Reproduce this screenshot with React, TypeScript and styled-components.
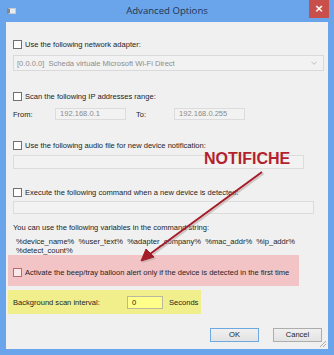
import React from 'react';
import styled, { createGlobalStyle } from 'styled-components';

const GlobalStyle = createGlobalStyle`
  html, body { margin: 0; padding: 0; background: #fff; }
  body { font-family: "Liberation Sans", Arial, sans-serif; }
`;

const variables = '%device_name%  %user_text%  %adapter_company%  %mac_addr%  %ip_addr%';

export default function App() {
    return <>
        <GlobalStyle />
        <Window>
            <TitleBar>
                <AppIcon />
                <Title>Advanced Options</Title>
                <CloseButton>×</CloseButton>
            </TitleBar>
            <Client>
                <CheckRow $mt={16}>
                    <Box />
                    <span>Use the following network adapter:</span>
                </CheckRow>
                <Select $mt={5}>
                    <span>[0.0.0.0]&nbsp; Scheda virtuale Microsoft Wi-Fi Direct</span>
                    <Caret viewBox="0 0 7 4"><path d="M0.5 0.5 L3.5 3.5 L6.5 0.5" /></Caret>
                </Select>

                <CheckRow $mt={19}>
                    <Box />
                    <span>Scan the following IP addresses range:</span>
                </CheckRow>
                <RangeRow>
                    <span>From:</span>
                    <IpInput>192.168.0.1</IpInput>
                    <span>To:</span>
                    <IpInput>192.168.0.255</IpInput>
                </RangeRow>

                <CheckRow $mt={19}>
                    <Box />
                    <span>Use the following audio file for new device notification:</span>
                </CheckRow>
                <TextInput $mt={4} $h={14} $w={291} />

                <CheckRow $mt={17}>
                    <Box />
                    <span>Execute the following command when a new device is detected:</span>
                </CheckRow>
                <TextInput $mt={3} $h={13} $w={301} />

                <Hint>You can use the following variables in the command string:</Hint>
                <Vars>
                    <div>{variables}</div>
                    <div>%detect_count%</div>
                </Vars>

                <PinkZone>
                    <CheckRow $mt={0}>
                        <Box $red />
                        <span>Activate the beep/tray balloon alert only if the device is detected in the first time</span>
                    </CheckRow>
                </PinkZone>

                <YellowZone>
                    <IntervalLabel>Background scan interval:</IntervalLabel>
                    <IntervalInput>0</IntervalInput>
                    <span>Seconds</span>
                </YellowZone>

                <Buttons>
                    <Button $default>OK</Button>
                    <Button>Cancel</Button>
                </Buttons>
                <Grip viewBox="0 0 8 8">
                    <path d="M7 1 L1 7 M7 4 L4 7 M7 7 L7 7" />
                </Grip>
            </Client>

            <Notice>NOTIFICHE</Notice>
            <Arrow viewBox="0 0 334 355">
                <g transform="translate(1.5 1.5)" stroke="#b9a9a9" fill="#b9a9a9" opacity="0.6">
                    <line x1="262" y1="172" x2="150" y2="254" strokeWidth="2" />
                    <polygon points="141,261 146,249 154,257" />
                </g>
                <g stroke="#a41c27" fill="#a41c27">
                    <line x1="262" y1="172" x2="150" y2="254" strokeWidth="2" />
                    <polygon points="141,261 146,249 154,257" />
                </g>
            </Arrow>
        </Window>
    </>;
}

const Window = styled.div`
    position: relative;
    width: 334px;
    height: 355px;
    background: #6aa5ec;
    display: flex;
    flex-direction: column;
    box-sizing: border-box;
    font-size: 7.55px;
    color: #1d1d1d;
    overflow: hidden;
`;

const TitleBar = styled.div`
    height: 22px;
    display: grid;
    grid-template-columns: 1fr auto 1fr;
    align-items: start;
`;

const AppIcon = styled.div`
    width: 9px;
    height: 6px;
    margin: 8px 0 0 7px;
    background: #e8ecef;
    border: 1px solid #c5ccd3;
    border-left: 3px solid #7c8790;
    box-sizing: border-box;
`;

const Title = styled.div`
    font-family: "Open Sans", "Noto Sans", sans-serif;
    font-size: 9.6px;
    line-height: 22px;
    color: #24344f;
`;

const CloseButton = styled.div`
    justify-self: end;
    width: 20px;
    height: 18px;
    margin-right: 5px;
    background: #c9504a;
    color: #fff;
    font-family: "DejaVu Sans", sans-serif;
    font-weight: bold;
    font-size: 11px;
    line-height: 17px;
    text-align: center;
`;

const Client = styled.div`
    position: relative;
    flex: 1;
    margin: 0 6px 6px;
    padding: 0 7px;
    background: #f0f0f0;
    display: flex;
    flex-direction: column;
    align-items: flex-start;
`;

const CheckRow = styled.label<{ $mt: number }>`
    margin-top: ${p => p.$mt}px;
    height: 12px;
    display: flex;
    align-items: center;
    gap: 3px;
    white-space: nowrap;
`;

const Box = styled.span<{ $red?: boolean }>`
    width: 9px;
    height: 9px;
    box-sizing: border-box;
    border: 1px solid ${p => p.$red ? '#b86a6e' : '#707070'};
    background: ${p => p.$red ? '#fbe9ea' : '#fff'};
`;

const Select = styled.div<{ $mt: number }>`
    margin-top: ${p => p.$mt}px;
    width: 311px;
    height: 16px;
    box-sizing: border-box;
    border: 1px solid #d9d9d9;
    background: #f2f2f2;
    color: #8c8c8c;
    padding: 0 6px 0 3px;
    display: flex;
    align-items: center;
    justify-content: space-between;
`;

const Caret = styled.svg`
    width: 6px;
    height: 4px;
    fill: none;
    stroke: #b5b5b5;
    stroke-width: 1;
`;

const RangeRow = styled.div`
    margin-top: 6px;
    height: 12px;
    display: grid;
    grid-template-columns: 42px 71px 48px 71px;
    align-items: center;
    & > span:nth-of-type(2) { padding-left: 10px; }
`;

const IpInput = styled.div`
    height: 12px;
    box-sizing: border-box;
    border: 1px solid #dcdcdc;
    background: #f2f2f2;
    color: #8c8c8c;
    padding-left: 4px;
    line-height: 10px;
`;

const TextInput = styled.div<{ $mt: number; $h: number; $w: number }>`
    margin-top: ${p => p.$mt}px;
    width: ${p => p.$w}px;
    height: ${p => p.$h}px;
    box-sizing: border-box;
    border: 1px solid #dcdcdc;
    background: #f2f2f2;
`;

const Hint = styled.div`
    margin-top: 9px;
    line-height: 10px;
`;

const Vars = styled.div`
    margin-top: 5px;
    padding-left: 3px;
    line-height: 8.5px;
    white-space: pre;
`;

const PinkZone = styled.div`
    margin: 0 0 0 -5px;
    width: 291px;
    height: 31px;
    box-sizing: border-box;
    padding: 11px 0 0 5px;
    background: #f3c4c6;
`;

const YellowZone = styled.div`
    margin: 4px 0 0 -5px;
    width: 193px;
    height: 24px;
    box-sizing: border-box;
    padding-left: 5px;
    background: #f1ef8c;
    display: flex;
    align-items: center;
`;

const IntervalLabel = styled.span`
    width: 114px;
`;

const IntervalInput = styled.div`
    width: 36px;
    height: 13px;
    margin-right: 6px;
    box-sizing: border-box;
    border: 1px solid #b9b9a0;
    background: #ffff8a;
    padding-left: 4px;
    line-height: 11px;
`;

const Buttons = styled.div`
    margin-top: 14px;
    align-self: flex-end;
    display: flex;
    gap: 14px;
    margin-right: -1px;
`;

const Button = styled.div<{ $default?: boolean }>`
    width: 49px;
    height: 14px;
    box-sizing: border-box;
    border: 1px solid ${p => p.$default ? '#6fa9e2' : '#adadad'};
    background: linear-gradient(#f0f0f0, #e3e3e3);
    line-height: 12px;
    text-align: center;
`;

const Grip = styled.svg`
    position: absolute;
    right: 1px;
    bottom: 1px;
    width: 8px;
    height: 8px;
    fill: none;
    stroke: #a9a9a9;
    stroke-width: 1;
`;

const Notice = styled.div`
    position: absolute;
    left: 204px;
    top: 151px;
    font-family: "Liberation Sans", Arial, sans-serif;
    font-weight: bold;
    font-size: 16px;
    line-height: 16px;
    color: #b41f2d;
`;

const Arrow = styled.svg`
    position: absolute;
    inset: 0;
    width: 334px;
    height: 355px;
    pointer-events: none;
`;
